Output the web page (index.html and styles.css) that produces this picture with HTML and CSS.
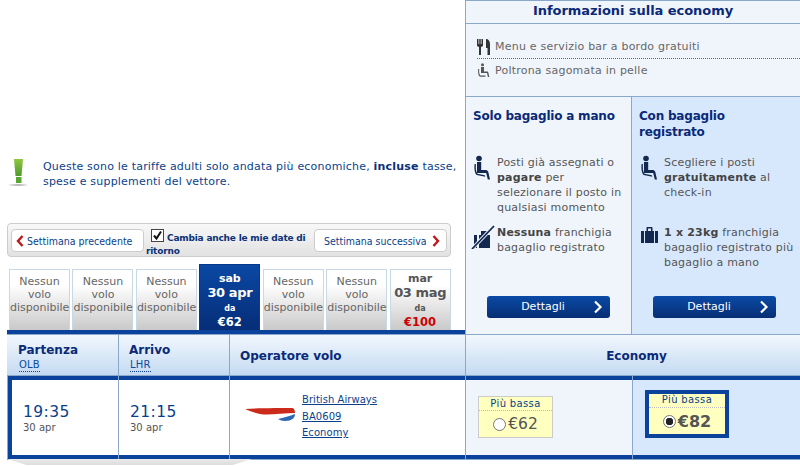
FILE: index.html
```html
<!DOCTYPE html>
<html lang="it">
<head>
<meta charset="utf-8">
<title>Informazioni sulla economy</title>
<link rel="stylesheet" href="styles.css">
</head>
<body>
<div class="page">
  <div class="top">
    <div class="left">
      <div class="notice">
        <svg class="notice-icon" width="30" height="30" viewBox="0 0 30 30"><defs><linearGradient id="g" x1="0" y1="0" x2="0" y2="1"><stop offset="0" stop-color="#8ec63f"/><stop offset="1" stop-color="#4f9a2c"/></linearGradient><radialGradient id="s"><stop offset="0" stop-color="#999"/><stop offset="1" stop-color="#fff"/></radialGradient></defs><path d="M8 1h9l-1.500 17h-6z" fill="url(#g)"/><rect x="10" y="19" width="5.500" height="6" fill="#5aa632"/><ellipse cx="12" cy="27" rx="11" ry="1.500" fill="url(#s)"/></svg>
        <p class="notice-text">Queste sono le tariffe adulti solo andata più economiche, <b>incluse</b> tasse, spese e supplementi del vettore.</p>
      </div>
      <div class="weekbar">
        <a class="weekbtn prev"><svg width="8" height="12" viewBox="0 0 8 12"><path d="M6.500 1 2 6l4.500 5" fill="none" stroke="#c0161c" stroke-width="2.400"/></svg>Settimana precedente</a>
        <div class="change"><svg class="check" width="13" height="13" viewBox="0 0 13 13"><rect x=".5" y=".5" width="12" height="12" fill="#fff" stroke="#444"/><path d="M3 6.500l2.500 3L10 2.500" fill="none" stroke="#111" stroke-width="2"/></svg><span>Cambia anche le mie date di ritorno</span></div>
        <a class="weekbtn next">Settimana successiva<svg width="8" height="12" viewBox="0 0 8 12"><path d="M1.500 1 6 6l-4.500 5" fill="none" stroke="#c0161c" stroke-width="2.400"/></svg></a>
      </div>
      <div class="tabs">
        <div class="tab">Nessun volo disponibile</div>
        <div class="tab">Nessun volo disponibile</div>
        <div class="tab">Nessun volo disponibile</div>
        <div class="tab price current"><b>sab</b><strong>30 apr</strong><small>da</small><em>€62</em></div>
        <div class="tab">Nessun volo disponibile</div>
        <div class="tab">Nessun volo disponibile</div>
        <div class="tab price"><b>mar</b><strong>03 mag</strong><small>da</small><em>€100</em></div>
      </div>
    </div>
    <aside class="panel">
      <h2 class="panel-title">Informazioni sulla economy</h2>
      <ul class="perks">
        <li><svg class="perk-icon" width="13" height="16" viewBox="0 0 13 16"><path d="M0 0h1.500v5h.75V0h1.500v5h.75V0H6v6c0 1-1 2-2 2v8H2V8C1 8 0 7 0 6zM9 0c2.500 0 4 2 4 5v11h-2.500V9H9z" fill="#333"/></svg>Menu e servizio bar a bordo gratuiti</li>
        <li><svg class="perk-icon" width="13" height="14" viewBox="0 0 13 14"><circle cx="5.500" cy="1.800" r="1.500" fill="#555"/><path d="M4 4h3v4.500h3c.8 0 1.200.5 1.400 1.200l.9 4.300h-1.400l-.9-4H4z" fill="#555"/><path d="M2.200 6c-.3 2.500 0 5.500 1.200 6.500h5v1.200H3C1.500 13 .8 9.500 1.200 6z" fill="#555"/></svg>Poltrona sagomata in pelle</li>
      </ul>
      <div class="options">
        <section class="option">
          <h3>Solo bagaglio a mano</h3>
          <div class="feature seat-feature">
            <svg class="f-icon seat" width="20" height="26" viewBox="0 0 20 26"><circle cx="6" cy="3.500" r="2.800" fill="#12284f"/><path d="M4 7h4.200v8H13c1 0 2 1 2.300 2l1.700 7.500h-2.200l-1.600-6.500H4z" fill="#12284f"/><path d="M1.600 9h1.300c-.3 4 0 8 1.600 9.800l7.300 1.400.5 1.500-8.600-1.700C1.700 18.500 1 13 1.600 9z" fill="#12284f"/></svg>
            <p>Posti già assegnati o <b>pagare</b> per selezionare il posto in qualsiasi momento</p>
          </div>
          <div class="feature bag-feature">
            <svg class="f-icon nobag" width="24" height="24" viewBox="0 0 24 24"><path d="M3 10h3v13H3zM8 10h2V6h7v4h2v13H8z" fill="#12284f"/><path d="M1 24 23 1" stroke="#f0f5fc" stroke-width="3.500"/><path d="M1 24 23 1" stroke="#12284f" stroke-width="1.800"/></svg>
            <p><b>Nessuna</b> franchigia bagaglio registrato</p>
          </div>
          <a class="details">Dettagli<svg width="10" height="14" viewBox="0 0 10 14"><path d="M2 1.500 7.500 7 2 12.500" fill="none" stroke="#fff" stroke-width="2.200"/></svg></a>
        </section>
        <section class="option blue">
          <h3>Con bagaglio registrato</h3>
          <div class="feature seat-feature">
            <svg class="f-icon seat" width="20" height="26" viewBox="0 0 20 26"><circle cx="6" cy="3.500" r="2.800" fill="#12284f"/><path d="M4 7h4.200v8H13c1 0 2 1 2.300 2l1.700 7.500h-2.200l-1.600-6.500H4z" fill="#12284f"/><path d="M1.600 9h1.300c-.3 4 0 8 1.600 9.800l7.300 1.400.5 1.500-8.600-1.700C1.700 18.500 1 13 1.600 9z" fill="#12284f"/></svg>
            <p>Scegliere i posti <b>gratuitamente</b> al check-in</p>
          </div>
          <div class="feature bag-feature">
            <svg class="f-icon bag" width="17" height="16" viewBox="0 0 17 16"><path d="M0 4h3v12H0zM14 4h3v12h-3zM4 4h1.500V1c0-.6.4-1 1-1h4c.6 0 1 .4 1 1v3H13v12H4zM7 1.500V4h3V1.500z" fill="#12284f"/></svg>
            <p><b>1 x 23kg</b> franchigia bagaglio registrato più bagaglio a mano</p>
          </div>
          <a class="details">Dettagli<svg width="10" height="14" viewBox="0 0 10 14"><path d="M2 1.500 7.500 7 2 12.500" fill="none" stroke="#fff" stroke-width="2.200"/></svg></a>
        </section>
      </div>
    </aside>
  </div>
  <div class="results">
    <div class="head">
      <div class="hcell h-dep"><b>Partenza</b><abbr>OLB</abbr></div>
      <div class="hcell h-arr"><b>Arrivo</b><abbr>LHR</abbr></div>
      <div class="hcell h-op"><b>Operatore volo</b></div>
      <div class="hcell h-eco"><b>Economy</b></div>
    </div>
    <div class="row">
      <div class="cell c-dep time"><span>19:35</span><small>30 apr</small></div>
      <div class="cell c-arr time"><span>21:15</span><small>30 apr</small></div>
      <div class="cell c-op carrier">
        <svg class="logo" width="52" height="16" viewBox="0 0 52 16"><path d="M0 2C15 1 35 1 47 1c2 0 3 2 3 5-10 0-20 1.500-28 1.500C12 7.500 5 4 0 2z" fill="#cc2a1a"/><path d="M33 12c7-2 13-3 17-5 0 4-3 7-10 7-3 0-5-1-7-2z" fill="#2d68b4"/></svg>
        <div class="links"><a>British Airways</a><a>BA0609</a><a>Economy</a></div>
      </div>
      <div class="cell fare-a">
        <div class="fare"><span class="tag">Più bassa</span><label><i class="radio"></i>€62</label></div>
      </div>
      <div class="cell fare-b">
        <div class="fare selected"><span class="tag">Più bassa</span><label><i class="radio on"></i><b>€82</b></label></div>
      </div>
    </div>
    <div class="shadow"></div>
  </div>
</div>
</body>
</html>
```
FILE: styles.css
```css
* { box-sizing: border-box; }
html, body { margin: 0; padding: 0; background: #fff; }
body { font-family: "DejaVu Sans", Verdana, sans-serif; font-size: 11px; color: #555; overflow: hidden; }
.page { width: 800px; height: 466px; overflow: hidden; }
p, h2, h3, ul { margin: 0; padding: 0; }
.top { display: flex; height: 334px; }
.left { width: 465px; padding: 158px 0 0 7px; display: flex; flex-direction: column; }
.notice { display: flex; height: 30px; margin-left: -1px; }
.notice-icon { flex: none; margin-right: 7px; }
.notice-text { width: 420px; margin-top: 1px; font-size: 11px; line-height: 15px; letter-spacing: 0.2px; color: #0a3f8c; }
.notice-text b { color: #0a3278; }
.weekbar { margin-top: 35px; width: 444px; height: 34px; border: 1px solid #ccc; border-radius: 4px; background: linear-gradient(#f8f8f8, #e2e2e2); display: flex; align-items: center; padding: 0 3px; }
.weekbtn { flex: none; height: 23px; padding-top: 1px; background: #fff; border: 1px solid #ccc; border-radius: 4px; color: #0a3f8c; font-family: "DejaVu Sans Condensed", "DejaVu Sans", sans-serif; font-size: 10.500px; display: flex; align-items: center; gap: 3px; white-space: nowrap; }
.prev { width: 133px; padding-left: 4px; }
.next { width: 133px; padding-left: 9px; gap: 5px; }
.change { width: 170px; margin: 6px 0 0 2px; font-size: 9px; letter-spacing: -0.200px; line-height: 13px; font-weight: bold; color: #0a3278; }
.check { margin: 0 3px 0 5px; vertical-align: -1px; }
.tabs { display: flex; margin-top: 7px; align-items: flex-end; height: 70px; padding-left: 2px; gap: 2.450px; border-bottom: 4px solid #0a429c; }
.tab { width: 61px; height: 61px; flex: none; border: 1px solid #c8d8e4; border-bottom: 0; background: linear-gradient(#fff 25%, #c9c9c9); font-size: 11px; line-height: 13px; text-align: center; padding-top: 5px; color: #666; }
.price { padding-top: 2px; color: #555; }
.price b, .price strong, .price small, .price em { display: block; font-style: normal; font-weight: bold; }
.price b { font-size: 11px; line-height: 13px; }
.price strong { font-size: 13px; line-height: 15px; letter-spacing: -0.400px; }
.price small { font-size: 8px; line-height: 17px; }
.price em { font-size: 11.500px; color: #c00; line-height: 10px; }
.current { height: 66px; background: linear-gradient(#0a48a4, #062d78); border-color: #06398f; color: #fff; padding-top: 7px; }
.current em { color: #fff; }
.panel { width: 335px; border-left: 1px solid #8aa8cc; display: flex; flex-direction: column; background: #f0f5fc; }
.panel-title { height: 24px; border-top: 1px solid #8aa8cc; border-bottom: 1px solid #8aa8cc; text-align: center; font-size: 13px; letter-spacing: -0.050px; line-height: 20px; color: #0a2a78; font-weight: bold; }
.perks { list-style: none; height: 73px; padding: 11px 0 0 11px; border-bottom: 1px solid #8aa8cc; }
.perks li { display: flex; align-items: center; gap: 5px; height: 24px; color: #666; font-size: 11px; letter-spacing: 0.220px; }
.perks li:first-child { border-bottom: 1px dotted #666; }
.perks li:last-child { height: 22px; }
.perk-icon { flex: none; }
.options { flex: 1; display: flex; min-height: 0; }
.option { width: 166px; position: relative; padding: 11px 4px 0 7px; border-right: 1px solid #8aa8cc; }
.option.blue { flex: 1; background: #d8e8fc; border-right: 0; }
.option h3 { font-size: 12px; letter-spacing: -0.200px; line-height: 16px; height: 47px; max-width: 146px; color: #0a2a78; }
.blue h3 { max-width: 120px; }
.feature { display: flex; color: #555; line-height: 15px; letter-spacing: 0.200px; }
.feature p { font-size: 11px; }
.feature b { color: #444; }
.f-icon { flex: none; }
.seat-feature { height: 70px; }
.seat { margin-right: 4px; }
.blue .seat { margin-left: 1px; }
.nobag { margin-left: -2px; margin-right: 2px; }
.bag { margin: 2px 6px 0 2px; }
.details { position: absolute; left: 21px; top: 199px; width: 123px; height: 22px; border-radius: 3px; background: linear-gradient(#0a4aa6, #072e74); color: #fff; font-size: 11px; text-align: center; line-height: 22px; padding-right: 11px; }
.details svg { position: absolute; right: 7px; top: 4px; }
.results { position: relative; width: 800px; }
.head { display: flex; height: 42px; margin-left: 7px; border-top: 1px solid #8aa8cc; border-bottom: 1px solid #8aa8cc; background: linear-gradient(#f2f7fd, #c4daf2); }
.h-dep { width: 112px; }
.h-arr { width: 111px; }
.h-op { width: 236px; }
.h-eco { flex: 1; }
.hcell { border-right: 1px solid #8aa8cc; color: #0a2a78; font-size: 12px; padding: 8px 0 0 11px; }
.hcell:last-child { border-right: 0; }
.hcell b { display: block; line-height: 14px; }
.hcell abbr { display: inline-block; margin-left: 1px; font-size: 10px; letter-spacing: 0.200px; line-height: 12px; color: #0a4ca0; border-bottom: 1px dotted #0a3f8c; }
.h-arr, .h-op { padding-left: 10px; }
.h-op.hcell { padding-top: 14px; }
.h-eco.hcell { text-align: center; padding: 14px 0 0 7px; }
.row { display: flex; height: 83px; margin-left: 8px; border-top: 4px solid #0a429c; border-bottom: 4px solid #0a429c; border-left: 4px solid #0a429c; background: #fff; box-shadow: 0 0 0 1px #8aa8cc; }
.cell { position: relative; border-right: 1px solid #8aa8cc; }
.cell::after { content: ""; position: absolute; top: -4px; bottom: -4px; right: -1px; width: 1px; background: #8aa8cc; }
.c-dep { width: 107px; }
.c-arr { width: 111px; }
.c-op { width: 236px; }
.time { padding: 23px 0 0 11px; }
.time span { display: block; font-size: 15.500px; letter-spacing: 0.400px; line-height: 19px; color: #0a3f8c; }
.time small { display: block; font-size: 10px; line-height: 12px; color: #555; }
.carrier { display: flex; padding: 12px 0 0 15px; }
.logo { flex: none; margin: 15px 5px 0 0; }
.links { display: flex; flex-direction: column; }
.links a { font-size: 10px; letter-spacing: 0.050px; line-height: 16.500px; color: #0a3f8c; text-decoration: underline; }
.fare-a { width: 167px; background: #f0f5fc; padding: 16px 0 0 12px; }
.fare-b { flex: 1; background: #d8e8fc; border-right: 0; padding: 10px 0 0 12px; }
.fare { width: 75px; height: 42px; background: #ffffc0; border: 1px solid #ccc; text-align: center; }
.tag { display: block; font-size: 10px; letter-spacing: 0.350px; line-height: 13px; color: #0a3f8c; border-bottom: 1px dotted #bbb; height: 14px; }
.fare label { display: flex; align-items: center; justify-content: center; height: 26px; font-size: 15.500px; color: #555; gap: 2px; }
.radio { display: inline-block; width: 13px; height: 13px; border-radius: 50%; border: 1px solid #777; background: #fff; }
.radio.on { background: radial-gradient(circle, #222 0 3.500px, #fff 4px); }
.selected { width: 84px; height: 48px; border: 4px solid #0a429c; }
.selected .tag { height: 14px; line-height: 12px; }
.selected b { font-size: 16px; }
.shadow { width: 245px; height: 6px; margin-left: 7px; background: linear-gradient(#eaeaea, #dcdcdc); clip-path: polygon(0 0, 100% 0, 92% 100%, 8% 100%); }
```
